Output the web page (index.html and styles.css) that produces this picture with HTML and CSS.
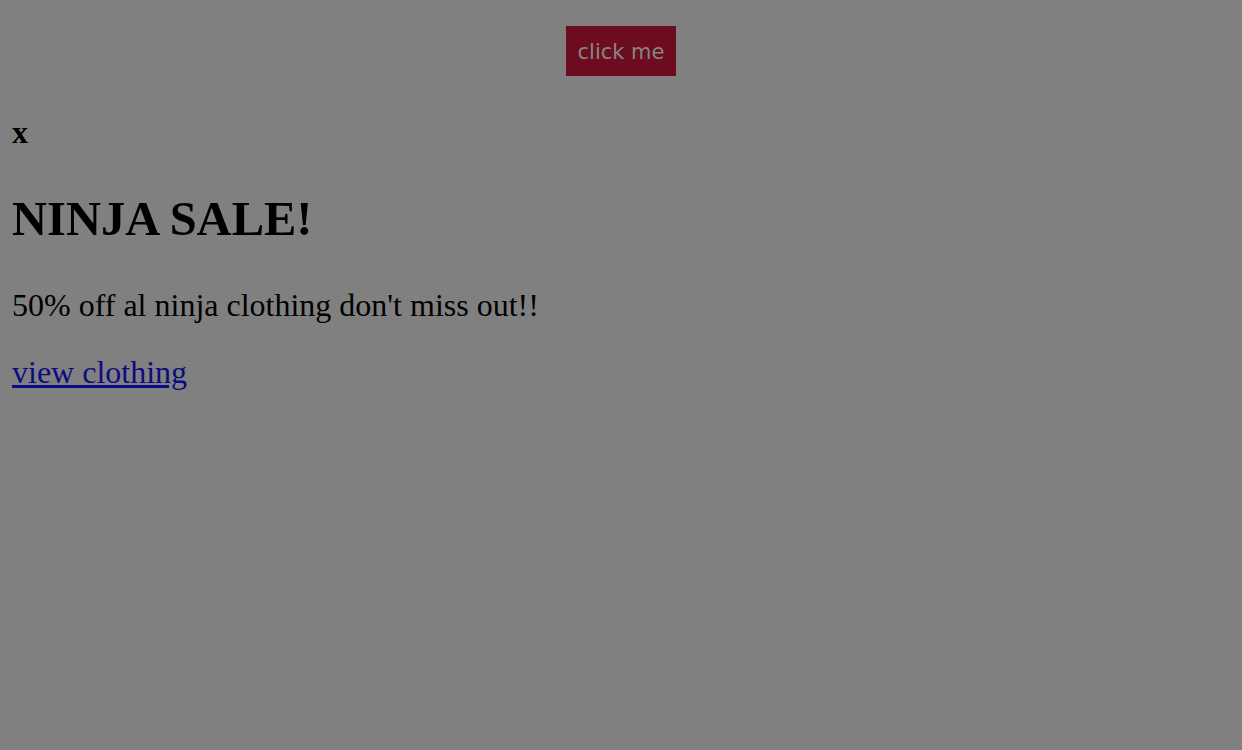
FILE: index.html
```html
<!DOCTYPE html>
<html>
<head>
<meta charset="utf-8">
<link rel="stylesheet" href="styles.css">
</head>
<body>
<div class="top">
  <button class="btn">click me</button>
</div>
<div class="popup">
  <div class="close">x</div>
  <h1 class="title">NINJA SALE!</h1>
  <p class="text">50% off al ninja clothing don't miss out!!</p>
  <a class="link" href="#">view clothing</a>
</div>
</body>
</html>
```
FILE: styles.css
```css
html, body {
  margin: 0;
  padding: 0;
  background: #808080;
  height: 100%;
}
body {
  font-family: "Liberation Serif", "Times New Roman", serif;
  color: #000;
}
.top {
  display: flex;
  justify-content: center;
  padding-top: 26px;
}
.btn {
  width: 110px;
  height: 50px;
  border: none;
  background: #6e0c1f;
  color: #858585;
  font-family: "DejaVu Sans", "Liberation Sans", sans-serif;
  font-size: 21px;
  padding: 2px 0 0;
}
.popup {
  padding: 0 12px;
}
.close {
  font-size: 32px;
  font-weight: bold;
  margin-top: 40px;
  line-height: 1;
}
.title {
  font-size: 48.5px;
  font-weight: bold;
  margin: 43px 0 0;
}
.text {
  font-size: 32px;
  margin: 41px 0 0;
}
.link {
  display: inline-block;
  font-size: 32px;
  margin-top: 30px;
  color: #0c0c82;
}
```
